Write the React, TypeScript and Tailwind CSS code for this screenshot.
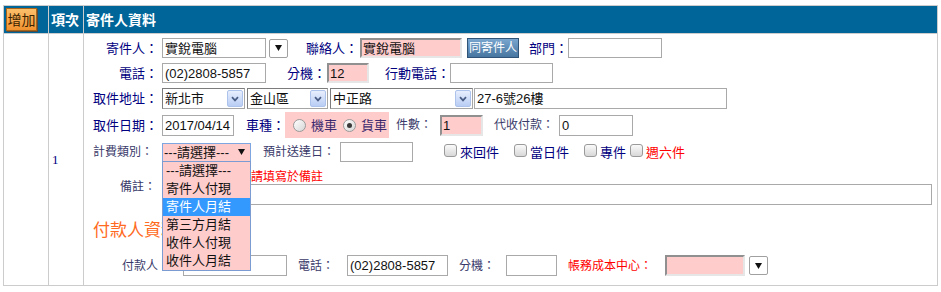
import React from "react";

const Chevron = () => (
  <div className="w-[16px] h-[17px] rounded-[2px] border border-[#aec3ec] bg-gradient-to-b from-[#e8effd] to-[#b9cdf4] flex items-center justify-center">
    <svg width="8" height="6" viewBox="0 0 8 6">
      <path d="M1 1.2 L4 4.4 L7 1.2" stroke="#4a5d85" strokeWidth="1.7" fill="none" />
    </svg>
  </div>
);

const DropBtn = ({ className = "" }: { className?: string }) => (
  <div className={"w-[19px] h-[19px] border border-[#a0a0a0] rounded-[2px] bg-white flex items-center justify-center " + className}>
    <svg width="7" height="6" viewBox="0 0 7 6">
      <path d="M0 0 H7 L3.5 6 Z" fill="#111" />
    </svg>
  </div>
);

const Box = ({ className = "", children }: { className?: string; children?: React.ReactNode }) => (
  <div className={"border border-[#a9a9a9] bg-white flex items-center pl-[2px] text-[#111] whitespace-nowrap " + className}>{children}</div>
);

const Pink = ({ className = "", children }: { className?: string; children?: React.ReactNode }) => (
  <div className={"border-2 border-t-[#909090] border-l-[#909090] border-b-[#e6e6e6] border-r-[#e6e6e6] bg-[#ffcccc] flex items-center pl-[1px] text-[#111] whitespace-nowrap " + className}>{children}</div>
);

const Sel = ({ className = "", children }: { className?: string; children?: React.ReactNode }) => (
  <div className={"h-[21px] border border-[#a5a5a5] border-t-[#7c7c7c] border-l-[#7c7c7c] bg-white flex items-center justify-between pl-[2px] pr-[1px] text-[#111] whitespace-nowrap " + className}>
    <span>{children}</span>
    <Chevron />
  </div>
);

const Radio = ({ checked = false, className = "" }: { checked?: boolean; className?: string }) => (
  <div className={"w-[13px] h-[13px] rounded-full border border-[#9a9a9a] bg-gradient-to-br from-[#ffffff] to-[#d6d6d6] flex items-center justify-center " + className}>
    {checked && <div className="w-[5px] h-[5px] rounded-full bg-[#3a3a3a]" />}
  </div>
);

const Check = ({ className = "" }: { className?: string }) => (
  <div className={"w-[13px] h-[13px] mb-[3px] rounded-[3px] border border-[#9a9a9a] bg-gradient-to-b from-[#fafafa] to-[#d8d8d8] " + className} />
);

export default function App() {
  return (
    <div className="w-[941px] h-[292px] bg-white pt-[5px] pl-[3px] font-['Liberation_Sans','Noto_Sans_CJK_TC',sans-serif] text-[13px] leading-none">
      <div className="w-[935px] border border-[#cccccc]">
        {/* header */}
        <div className="flex h-[28px] bg-[#006699] border-b border-[#cccccc] text-white font-bold text-[14px]">
          <div className="w-[45px] border-r border-[#cccccc] flex items-center pl-[2px]">
            <div className="w-[31px] h-[23px] border border-[#a86418] bg-gradient-to-b from-[#fcc06a] to-[#f1922e] shadow-[1px_1px_0_#5a4a3a] flex items-center justify-center text-[#3a2400] font-normal text-[14px]">
              增加
            </div>
          </div>
          <div className="w-[35px] border-r border-[#cccccc] flex items-center pl-[2px]">項次</div>
          <div className="flex-1 flex items-center pl-[2px]">寄件人資料</div>
        </div>
        {/* body */}
        <div className="flex">
          <div className="w-[45px] border-r border-[#cccccc]" />
          <div className="w-[35px] border-r border-[#cccccc] flex items-center pl-[3px] font-['Liberation_Serif',serif] text-[13px] text-[#000080]">1</div>
          <div className="flex-1 flex flex-col pt-[2px] pb-[7px]">
            {/* row 1 */}
            <div className="flex items-center h-[24px]">
              <div className="w-[78px] text-right pr-[4px] text-[#000080] whitespace-nowrap">寄件人：</div>
              <Box className="w-[104px] h-[20px]">實銳電腦</Box>
              <DropBtn className="ml-[3px]" />
              <span className="ml-[18px] text-[#000080] whitespace-nowrap">聯絡人：</span>
              <Pink className="ml-[2px] w-[102px] h-[20px]">實銳電腦</Pink>
              <div className="ml-[5px] w-[52px] h-[20px] border border-[#2f5478] bg-gradient-to-b from-[#78a6cf] to-[#4776a0] text-white text-[12px] flex items-center justify-center whitespace-nowrap">
                同寄件人
              </div>
              <span className="ml-[10px] text-[#000080] whitespace-nowrap">部門：</span>
              <Box className="w-[94px] h-[20px]" />
            </div>
            {/* row 2 */}
            <div className="flex items-center h-[24px] mt-[1px]">
              <div className="w-[78px] text-right pr-[4px] text-[#000080] whitespace-nowrap">電話：</div>
              <Box className="w-[104px] h-[20px]">(02)2808-5857</Box>
              <span className="ml-[21px] text-[#000080] whitespace-nowrap">分機：</span>
              <Pink className="ml-[1px] w-[42px] h-[20px]">12</Pink>
              <span className="ml-[16px] text-[#000080] whitespace-nowrap">行動電話：</span>
              <Box className="w-[103px] h-[20px]" />
            </div>
            {/* row 3 */}
            <div className="flex items-center h-[25px] mt-[1px]">
              <div className="w-[78px] text-right pr-[4px] text-[#000080] whitespace-nowrap">取件地址：</div>
              <Sel className="w-[83px]">新北市</Sel>
              <Sel className="ml-[2px] w-[81px]">金山區</Sel>
              <Sel className="ml-[2px] w-[143px]">中正路</Sel>
              <Box className="ml-[1px] w-[253px] h-[21px]">27-6號26樓</Box>
            </div>
            {/* row 4 */}
            <div className="flex items-center h-[28px]">
              <div className="w-[78px] text-right pr-[4px] text-[#000080] whitespace-nowrap">取件日期：</div>
              <Box className="w-[72px] h-[21px]">2017/04/14</Box>
              <span className="ml-[12px] text-[#000080] whitespace-nowrap">車種：</span>
              <div className="w-[104px] h-[26px] bg-[#ffcccc] flex items-center pl-[8px] text-[#3d2a6e] whitespace-nowrap">
                <Radio />
                <span className="ml-[5px]">機車</span>
                <Radio checked className="ml-[6px]" />
                <span className="ml-[5px]">貨車</span>
              </div>
              <span className="ml-[7px] text-[12px] text-[#3a3a6a] whitespace-nowrap">件數：</span>
              <Pink className="ml-[8px] w-[43px] h-[21px]">1</Pink>
              <span className="ml-[11px] text-[12px] text-[#3a3a6a] whitespace-nowrap">代收付款：</span>
              <Box className="ml-[5px] w-[74px] h-[21px]">0</Box>
            </div>
            {/* row 5 */}
            <div className="flex items-center h-[26px]">
              <div className="w-[78px] text-right pr-[9px] text-[12px] text-[#3a3a6a] whitespace-nowrap">計費類別：</div>
              <div className="relative">
                <div className="w-[89px] h-[19px] border border-[#7ea6e0] bg-[#ffcccc] flex items-center justify-between pl-[1px] pr-[5px] text-[#111] whitespace-nowrap">
                  <span>---請選擇---</span>
                  <svg width="7" height="6" viewBox="0 0 7 6">
                    <path d="M0 0 H7 L3.5 6 Z" fill="#111" />
                  </svg>
                </div>
                <div className="absolute left-0 top-[18px] z-10 w-[89px] border border-[#7a9cd3] bg-[#ffcccc] text-[#111] whitespace-nowrap">
                  <div className="h-[18px] flex items-center pl-[3px]">---請選擇---</div>
                  <div className="h-[18px] flex items-center pl-[3px]">寄件人付現</div>
                  <div className="h-[18px] flex items-center pl-[3px] bg-[#3399ff] text-white">寄件人月結</div>
                  <div className="h-[18px] flex items-center pl-[3px]">第三方月結</div>
                  <div className="h-[18px] flex items-center pl-[3px]">收件人付現</div>
                  <div className="h-[18px] flex items-center pl-[3px]">收件人月結</div>
                </div>
              </div>
              <span className="ml-[12px] text-[12px] text-[#3a3a6a] whitespace-nowrap">預計送達日：</span>
              <Box className="ml-[5px] w-[73px] h-[20px]" />
              <Check className="ml-[31px]" />
              <span className="ml-[3px] text-[#000080] whitespace-nowrap">來回件</span>
              <Check className="ml-[15px]" />
              <span className="ml-[3px] text-[#000080] whitespace-nowrap">當日件</span>
              <Check className="ml-[15px]" />
              <span className="ml-[3px] text-[#000080] whitespace-nowrap">專件</span>
              <Check className="ml-[4px]" />
              <span className="ml-[3px] text-[#ff0000] whitespace-nowrap">週六件</span>
            </div>
            {/* row 6 note */}
            <div className="h-[19px] pt-[6px] pl-[95px] text-[12px] leading-[12px] text-[#ff0000] whitespace-nowrap">
              其他計費方式請填寫於備註
            </div>
            {/* row 7 remark */}
            <div className="flex items-start h-[21px]">
              <div className="w-[78px] text-right pr-[6px] text-[12px] leading-[12px] mt-[-3px] text-[#3a3a6a] whitespace-nowrap">備註：</div>
              <Box className="w-[770px] h-[21px]" />
            </div>
            {/* heading */}
            <div className="mt-[15px] h-[20px] flex items-center pl-[9px] text-[17px] text-[#ff6a22] whitespace-nowrap">
              付款人資料
            </div>
            {/* payer row */}
            <div className="flex items-center h-[25px] mt-[13px]">
              <span className="ml-[38px] text-[12px] text-[#3a3a6a] whitespace-nowrap">付款人：</span>
              <Box className="ml-[13px] w-[104px] h-[21px]" />
              <span className="ml-[11px] text-[12px] text-[#3a3a6a] whitespace-nowrap">電話：</span>
              <Box className="ml-[13px] w-[101px] h-[21px]">(02)2808-5857</Box>
              <span className="ml-[11px] text-[12px] text-[#3a3a6a] whitespace-nowrap">分機：</span>
              <Box className="ml-[11px] w-[51px] h-[21px]" />
              <span className="ml-[11px] text-[12px] text-[#ff0000] whitespace-nowrap">帳務成本中心：</span>
              <Pink className="ml-[13px] w-[80px] h-[21px]" />
              <DropBtn className="ml-[4px]" />
            </div>
          </div>
        </div>
      </div>
    </div>
  );
}
